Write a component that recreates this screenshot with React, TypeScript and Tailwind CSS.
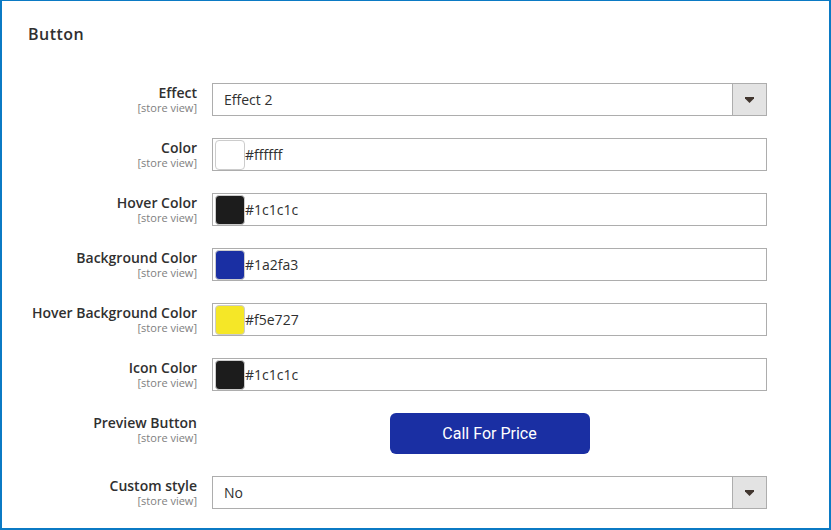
import React from 'react';

const rows = [
  { label: 'Color', value: '#ffffff', swatch: 'bg-[#ffffff]' },
  { label: 'Hover Color', value: '#1c1c1c', swatch: 'bg-[#1c1c1c]' },
  { label: 'Background Color', value: '#1a2fa3', swatch: 'bg-[#1a2fa3]' },
  { label: 'Hover Background Color', value: '#f5e727', swatch: 'bg-[#f5e727]' },
  { label: 'Icon Color', value: '#1c1c1c', swatch: 'bg-[#1c1c1c]' },
];

function Label({ text }: { text: string }) {
  return (
    <div className="w-[195px] shrink-0 pt-[1px] text-right">
      <div className="text-[14px] leading-[18px] font-semibold text-[#303030]">{text}</div>
      <div className="text-[11px] leading-[12px] text-[#808080]">[store view]</div>
    </div>
  );
}

function SelectBox({ value }: { value: string }) {
  return (
    <div className="flex h-[33px] w-[555px] border border-[#adadad] bg-white">
      <div className="flex flex-1 items-center pl-[11px] text-[14px] text-[#303030]">{value}</div>
      <div className="flex w-[34px] items-center justify-center border-l border-[#adadad] bg-[#e3e3e3]">
        {/* small down arrow */}
        <svg width="9" height="6" viewBox="0 0 9 6">
          <path d="M0 0h9v1.5L4.5 6 0 1.5z" fill="#41362f" />
        </svg>
      </div>
    </div>
  );
}

function ColorInput({ value, swatch }: { value: string; swatch: string }) {
  return (
    <div className="flex h-[33px] w-[555px] items-center border border-[#adadad] bg-white pl-[2px]">
      <div className={`h-[30px] w-[30px] rounded-[4px] border border-[#cccccc] ${swatch}`}></div>
      <span className="text-[14px] text-[#303030]">{value}</span>
    </div>
  );
}

export default function App() {
  return (
    <div
      className="h-[530px] w-[831px] border-x-2 border-t border-b-2 border-[#0b7ac4] bg-white"
      style={{ fontFamily: '"Open Sans", sans-serif' }}
    >
      <h2 className="pl-[26px] pt-[23px] text-[16px] leading-[20px] font-semibold tracking-[0.03em] text-[#303030]">
        Button
      </h2>

      <div className="mt-[39px] flex flex-col gap-[22px]">
        <div className="flex gap-[15px]">
          <Label text="Effect" />
          <SelectBox value="Effect 2" />
        </div>

        {rows.map(r => (
          <div key={r.label} className="flex gap-[15px]">
            <Label text={r.label} />
            <ColorInput value={r.value} swatch={r.swatch} />
          </div>
        ))}

        <div className="flex gap-[15px]">
          <Label text="Preview Button" />
          <div className="flex w-[555px] justify-center">
            <button
              className="h-[41px] w-[200px] rounded-[6px] bg-[#1a2fa3] text-[16px] text-white"
              style={{ fontFamily: 'Roboto, sans-serif' }}
            >
              Call For Price
            </button>
          </div>
        </div>

        <div className="flex gap-[15px]">
          <Label text="Custom style" />
          <SelectBox value="No" />
        </div>
      </div>
    </div>
  );
}
